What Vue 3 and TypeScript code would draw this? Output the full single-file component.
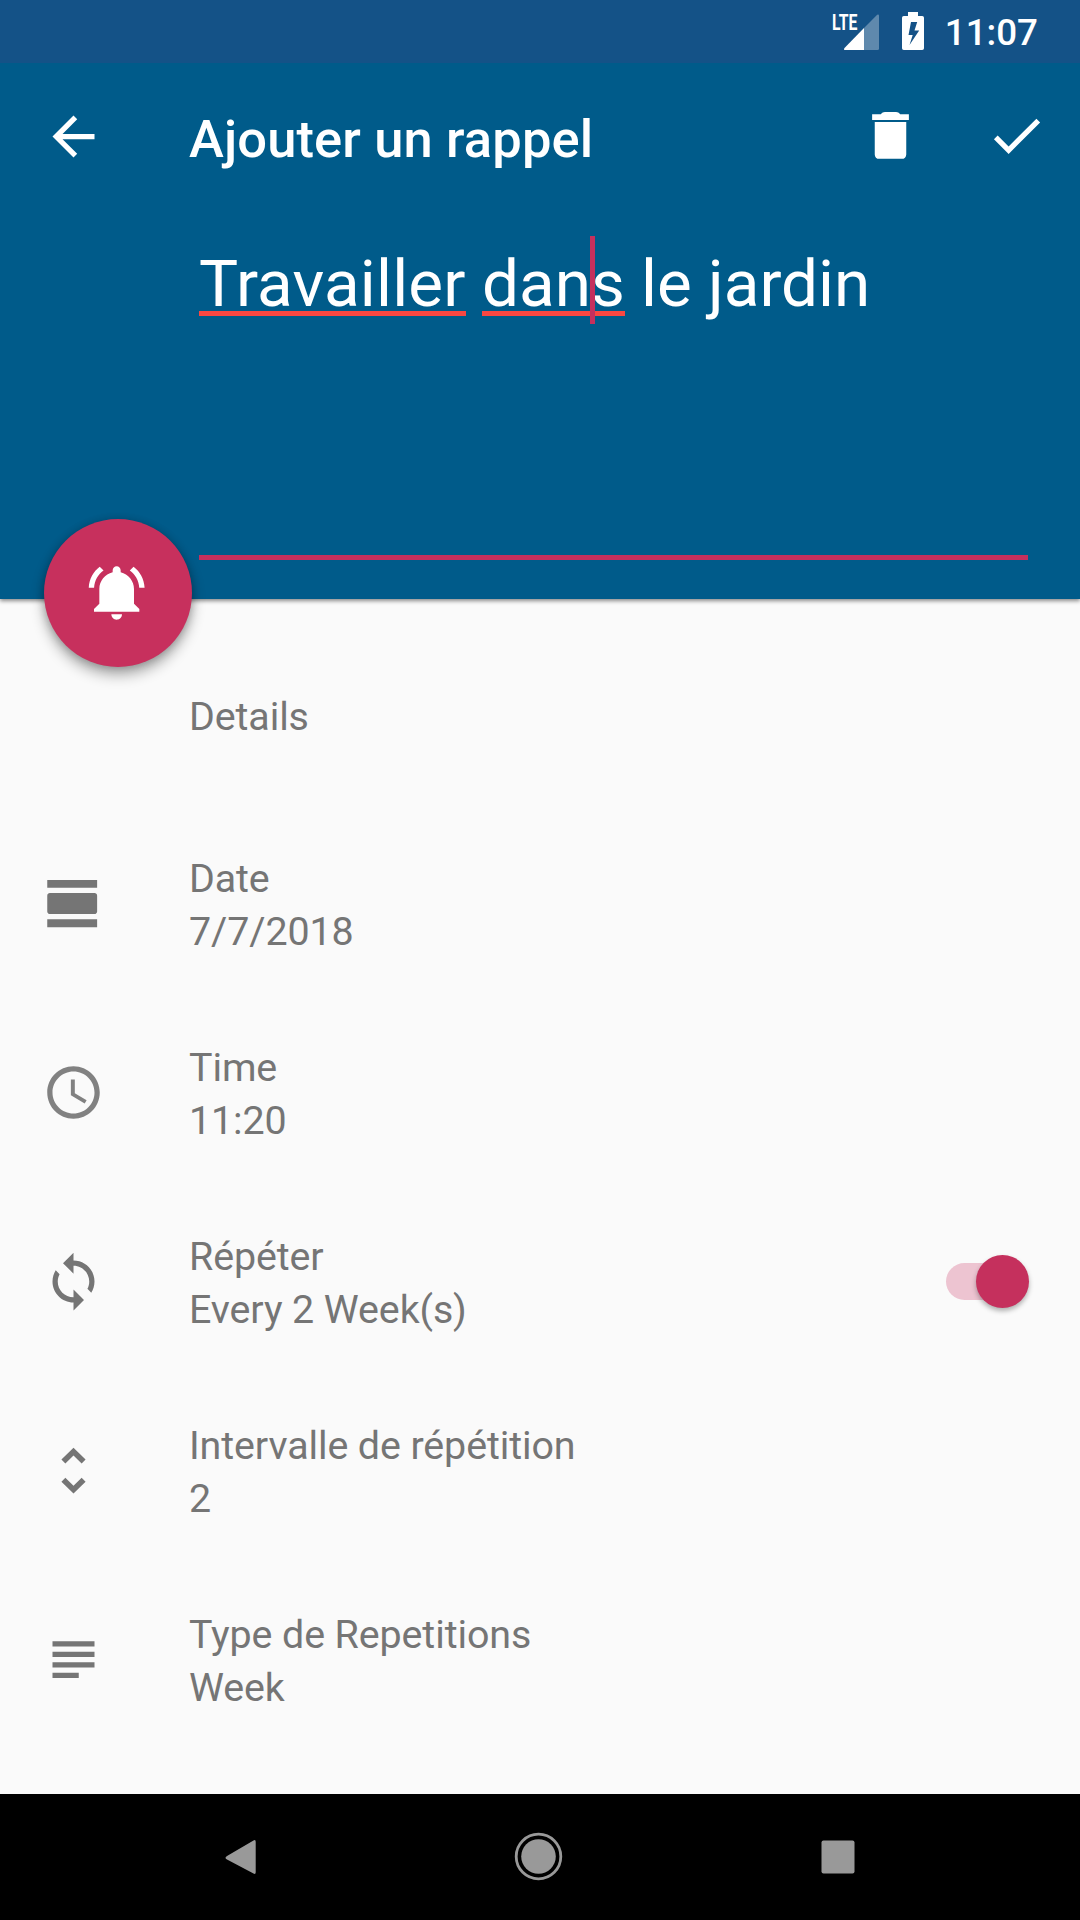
<script setup lang="ts">
interface DetailRow {
  id: string
  label: string
  value: string
  paths: string[]
  faded?: boolean
  toggle?: boolean
}

const rows: DetailRow[] = [
  {
    id: 'date',
    label: 'Date',
    value: '7/7/2018',
    paths: [
      'M2 21h19v-3H2v3zM20 8H3c-.55 0-1 .45-1 1v6c0 .55.45 1 1 1h17c.55 0 1-.45 1-1V9c0-.55-.45-1-1-1zM2 3v3h19V3H2z',
    ],
  },
  {
    id: 'time',
    label: 'Time',
    value: '11:20',
    faded: true,
    paths: [
      'M11.99 2C6.47 2 2 6.48 2 12s4.47 10 9.99 10C17.52 22 22 17.52 22 12S17.52 2 11.99 2zM12 20c-4.42 0-8-3.58-8-8s3.58-8 8-8 8 3.58 8 8-3.58 8-8 8z',
      'M12.5 7H11v6l5.25 3.15.75-1.23-4.5-2.67z',
    ],
  },
  {
    id: 'repeat',
    label: 'Répéter',
    value: 'Every 2 Week(s)',
    toggle: true,
    paths: [
      'M12 4V1L8 5l4 4V6c3.31 0 6 2.69 6 6 0 1.01-.25 1.97-.7 2.8l1.46 1.46C19.54 15.03 20 13.57 20 12c0-4.42-3.58-8-8-8zm0 14c-3.31 0-6-2.69-6-6 0-1.01.25-1.97.7-2.8L5.24 7.74C4.46 8.97 4 10.43 4 12c0 4.42 3.58 8 8 8v3l4-4-4-4v3z',
    ],
  },
  {
    id: 'interval',
    label: 'Intervalle de répétition',
    value: '2',
    paths: [
      'M12 6.3L15.1 9.35l1.5-1.5L12 3.3 7.4 7.85l1.5 1.5zM12 17.8L8.9 14.75l-1.5 1.5L12 20.8l4.6-4.55-1.5-1.5z',
    ],
  },
  {
    id: 'type',
    label: 'Type de Repetitions',
    value: 'Week',
    paths: ['M14 17H4v2h10v-2zm6-8H4v2h16V9zM4 15h16v-2H4v2zM4 5v2h16V5H4z'],
  },
]
</script>

<template>
  <div class="screen">
    <header class="header">
      <div class="status">
        <svg class="status-icons" width="100" height="63" viewBox="830 0 100 63">
          <text
            class="lte"
            x="832"
            y="30"
            textLength="25.5"
            lengthAdjust="spacingAndGlyphs"
          >LTE</text>
          <path d="M864 28v22h13.500q1.500 0 1.500-1.500V16q0-2-1.800-1.200z" fill="#fff" fill-opacity=".32" />
          <path d="M864 28v22h-18.500q-2.500 0-1-2z" fill="#fff" />
          <path
            fill="#fff"
            fill-rule="evenodd"
            d="M908 12h10v4h4.200q1.800 0 1.800 1.800v30.400q0 1.800-1.800 1.800h-18.400q-1.800 0-1.800-1.800V17.800q0-1.800 1.800-1.800H908zM911 22l-2.500 13h4.200l-3.200 10L919.200 30.500h-4.700l2.700-8.500z"
          />
        </svg>
        <span class="clock">11:07</span>
      </div>

      <div class="toolbar">
        <svg class="icon" viewBox="0 0 24 24" fill="#fff">
          <path d="M20 11H7.830l5.590-5.590L12 4l-8 8 8 8 1.410-1.410L7.830 13H20v-2z" />
        </svg>
        <h1 class="title">Ajouter un rappel</h1>
        <svg class="icon action trash" viewBox="0 0 24 24" fill="#fff">
          <path d="M6 6.900h12v12.300c0 1-.7 1.700-1.700 1.700H7.700c-1 0-1.700-.7-1.700-1.700zM19 3.900h-3.300c-.5-.6-.9-.9-1.600-.9H9.900c-.7 0-1.100.3-1.600.9H5v2.200h14z" />
        </svg>
        <svg class="icon action" viewBox="0 0 24 24" fill="#fff">
          <path d="M9 16.170L4.830 12l-1.420 1.410L9 19 21 7l-1.410-1.410z" />
        </svg>
      </div>

      <div class="editor">
        <p class="entry"><span class="typo wide">Travailler</span> <span class="typo">dan<i class="caret"></i>s</span> le jardin</p>
      </div>

      <button class="fab" aria-label="Rappel">
        <svg width="64" height="64" viewBox="0 0 24 24" fill="#fff">
          <path d="M6.580 3.580L5.150 2.150C2.760 3.970 1.180 6.800 1.030 10h2c.15-2.650 1.510-4.970 3.550-6.420zM19.970 10h2c-.15-3.200-1.730-6.030-4.130-7.850l-1.420 1.430c2.020 1.450 3.390 3.770 3.550 6.420zM18 10.500c0-3.070-2.130-5.640-5-6.320V3.500c0-.83-.67-1.500-1.500-1.500S10 2.670 10 3.500v.68c-2.870.68-5 3.250-5 6.320V16l-2 2v1h17v-1l-2-2zM11.500 22c.14 0 .27-.01.4-.04.65-.13 1.190-.58 1.440-1.180.1-.24.16-.5.16-.78h-4c0 1.100.9 2 2 2z" />
        </svg>
      </button>
    </header>

    <main class="details">
      <h2 class="section">Details</h2>
      <div v-for="row in rows" :key="row.id" class="row">
        <svg class="icon" :class="{ faded: row.faded }" viewBox="0 0 24 24" fill="#757575">
          <path v-for="d in row.paths" :key="d" :d="d" />
        </svg>
        <div class="text">
          <div>{{ row.label }}</div>
          <div>{{ row.value }}</div>
        </div>
        <div v-if="row.toggle" class="switch"><span class="thumb"></span></div>
      </div>
    </main>

    <nav class="navbar">
      <svg width="60" height="60" viewBox="0 0 60 60">
        <path d="M17 29L43.500 13.500q2.200-1.200 2.200 1.200v30.600q0 2.400-2.200 1.200L17 32.500q-3-1.750 0-3.500z" fill="#999" />
      </svg>
      <svg width="60" height="60" viewBox="0 0 60 60">
        <circle cx="29.500" cy="29.500" r="22.300" fill="none" stroke="#999" stroke-width="2.800" />
        <circle cx="29.500" cy="29.500" r="17.300" fill="#999" />
      </svg>
      <svg width="60" height="60" viewBox="0 0 60 60">
        <rect x="13.500" y="13.500" width="33" height="33" rx="2" fill="#999" />
      </svg>
    </nav>
  </div>
</template>

<style>
body {
  margin: 0;
}
</style>

<style scoped>
.screen {
  display: flex;
  flex-direction: column;
  width: 1080px;
  height: 1920px;
  overflow: hidden;
  background: #fafafa;
  font-family: Roboto, 'Liberation Sans', sans-serif;
}

.header {
  position: relative;
  flex: none;
  height: 599px;
  background: #005b8a;
  color: #fff;
  box-shadow: 0 2px 4px rgba(0, 0, 0, 0.45);
}

.status {
  display: flex;
  align-items: center;
  justify-content: flex-end;
  gap: 15px;
  height: 63px;
  padding-right: 42px;
  background: #145287;
}

.lte {
  font-size: 22.5px;
  font-weight: 700;
  fill: #fff;
}

.clock {
  padding-top: 3px;
  font-size: 36.75px;
  font-weight: 500;
  line-height: 60px;
}

.toolbar {
  display: flex;
  align-items: center;
  height: 147px;
  padding: 0 32px 0 42px;
}

.icon {
  flex: none;
  width: 63px;
  height: 63px;
}

.action {
  margin-bottom: 2px;
}

.title {
  flex: 1;
  margin: 5px 0 0 84px;
  font-size: 52.5px;
  font-weight: 500;
  line-height: 64px;
  letter-spacing: 0.13px;
}

.trash {
  margin-right: 63px;
}

.editor {
  box-sizing: border-box;
  height: 350px;
  margin: 0 52px 0 199px;
  padding-top: 30px;
  border-bottom: 5px solid #c5305d;
}

.entry {
  margin: 0;
  font-size: 65.6px;
  line-height: 88px;
  white-space: nowrap;
}

.typo {
  position: relative;
}

.wide {
  letter-spacing: 0.2px;
}

.typo::after {
  content: '';
  position: absolute;
  left: 0;
  right: 0;
  top: 66px;
  height: 5px;
  background: #f94742;
}

.caret {
  position: relative;
}

.caret::after {
  content: '';
  position: absolute;
  z-index: 1;
  left: -1px;
  bottom: -2px;
  width: 5px;
  height: 88px;
  background: #c5305d;
}

.fab {
  position: absolute;
  left: 44px;
  top: 519px;
  display: flex;
  align-items: center;
  justify-content: center;
  width: 148px;
  height: 148px;
  padding: 0 0 1px;
  border: 0;
  border-radius: 50%;
  background: #c7305d;
  box-shadow: 0 8px 14px rgba(0, 0, 0, 0.32), 0 1px 8px rgba(0, 0, 0, 0.2);
}

.details {
  flex: 1;
  color: #757575;
  font-size: 39.4px;
  line-height: 53px;
  letter-spacing: -0.1px;
}

.section {
  height: 119px;
  margin: 0;
  padding-top: 91px;
  padding-left: 189px;
  font-size: inherit;
  font-weight: 400;
}

.row {
  display: flex;
  align-items: center;
  height: 189px;
  padding: 0 52px 0 42px;
}

.faded {
  opacity: 0.9;
}

.text {
  flex: 1;
  margin-left: 84px;
  padding-top: 3px;
}

.switch {
  display: flex;
  align-items: center;
  justify-content: flex-end;
  width: 82px;
  height: 37px;
  border-radius: 19px;
  background: #edc4d1;
}

.thumb {
  width: 53px;
  height: 53px;
  flex: none;
  margin-right: -1px;
  border-radius: 50%;
  background: #c5305d;
  box-shadow: 0 3px 5px rgba(0, 0, 0, 0.3);
}

.navbar {
  display: flex;
  align-items: center;
  justify-content: space-between;
  flex: none;
  height: 126px;
  padding: 0 212px 0 210px;
  background: #000;
}
</style>
